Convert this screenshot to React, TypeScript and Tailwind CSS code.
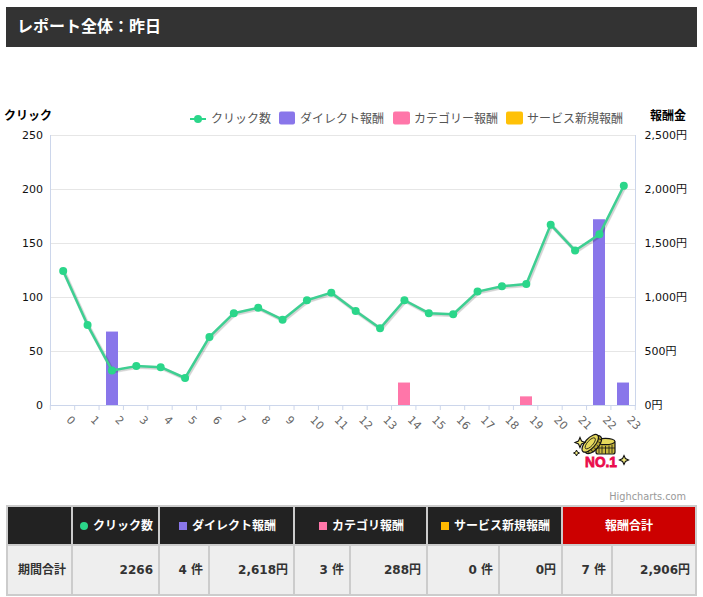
import React from "react";

const font = '"DejaVu Sans", "Noto Sans CJK JP", sans-serif';

const clicks = [124, 74, 32, 36, 35, 25, 63, 85, 90, 79, 97, 104, 87, 71, 97, 85, 84, 105, 110, 112, 167, 143, 158, 203];
const bars = [
  { x: 106, v: 680, color: "#8976ea" },
  { x: 593, v: 1720, color: "#8976ea" },
  { x: 617, v: 208, color: "#8976ea" },
  { x: 398, v: 208, color: "#ff76a9" },
  { x: 520, v: 80, color: "#ff76a9" },
];
const step = 585 / 24;
const cx = (i: number) => 51 + step * (i + 0.5);
const cy = (v: number) => 405 - v * 1.08;
const points = clicks.map((v, i) => `${cx(i)},${cy(v)}`).join(" ");
const shadowPoints = clicks.map((v, i) => `${cx(i) + 1},${cy(v) + 1}`).join(" ");

const Coins = () => (
  <g>
    {/* stack */}
    <rect x="596" y="441" width="19" height="13" rx="2" fill="#c9b83e" stroke="#141414" strokeWidth="1.2" />
    <ellipse cx="605.500" cy="441.500" rx="9.500" ry="3.200" fill="#e6d95c" stroke="#141414" strokeWidth="1.2" />
    <path d="M596 448h19M599 445v8M602 445.500v8M605.500 446v8M609 445.500v8M612 445v8" stroke="#141414" strokeWidth="0.8" fill="none" />
    {/* leaning coin */}
    <g transform="rotate(-48 591 444)">
      <ellipse cx="592" cy="446" rx="11" ry="5.500" fill="#b9a835" stroke="#141414" strokeWidth="1.2" />
      <path d="M583 449l1-3M586 451l1-3M590 452l.5-3M594 452l0-3M598 451l-.5-3M601 449l-1-3" stroke="#141414" strokeWidth="0.8" />
      <ellipse cx="591" cy="443" rx="11" ry="5" fill="#e6d95c" stroke="#141414" strokeWidth="1.2" />
      <ellipse cx="591" cy="443" rx="7" ry="2.800" fill="none" stroke="#141414" strokeWidth="0.8" />
    </g>
    {/* sparkles */}
    <path d="M580 437.500l1.500 3.500 3.500 1.500-3.500 1.500-1.500 3.500-1.500-3.500-3.500-1.500 3.500-1.500z" fill="#f3ec80" stroke="#111" strokeWidth="1.1" />
    <path d="M576.500 450l.9 2.100 2.100.9-2.100.9-.9 2.100-.9-2.100-2.100-.9 2.100-.9z" fill="#f3ec80" stroke="#111" strokeWidth="1" />
    <path d="M624 455.500l1.400 3.100 3.100 1.400-3.100 1.400-1.400 3.100-1.400-3.100-3.100-1.400 3.100-1.400z" fill="#f3ec80" stroke="#111" strokeWidth="1.1" />
    <text x="585" y="467" fontSize="15" fontWeight="700" fill="#ea0b4c" stroke="#ea0b4c" strokeWidth="0.8" textLength="32" lengthAdjust="spacingAndGlyphs" style={{ fontFamily: '"Liberation Sans", sans-serif' }}>
      NO.1
    </text>
  </g>
);

const Chart = () => (
  <svg viewBox="0 47 703 458" width="703" height="458" className="block" style={{ fontFamily: font }}>
    {[135, 189, 243, 297, 351].map((y) => (
      <line key={y} x1="51" x2="635" y1={y + 0.5} y2={y + 0.5} stroke="#e6e6e6" />
    ))}
    <line x1="50.500" x2="50.500" y1="135" y2="405" stroke="#ccd6eb" />
    <line x1="635.500" x2="635.500" y1="135" y2="405" stroke="#ccd6eb" />
    {bars.map((b) => (
      <rect key={b.x} x={b.x} y={405 - b.v * 0.108} width="12" height={b.v * 0.108} fill={b.color} />
    ))}
    <line x1="50" x2="636" y1="405.500" y2="405.500" stroke="#ccd6eb" />
    {Array.from({ length: 25 }, (_, i) => (
      <line key={i} x1={50.3 + step * i} x2={50.3 + step * i} y1="405" y2="410" stroke="#ccd6eb" />
    ))}

    <polyline points={shadowPoints} fill="none" stroke="#000" strokeOpacity="0.1" strokeWidth="4" />
    <polyline points={shadowPoints} fill="none" stroke="#000" strokeOpacity="0.08" strokeWidth="3" />
    <polyline points={points} fill="none" stroke="#3ecf92" strokeWidth="2.500" strokeLinejoin="round" />
    {clicks.map((v, i) => (
      <circle key={i} cx={cx(i)} cy={cy(v)} r="4" fill="#2bd68a" />
    ))}

    {/* left axis */}
    <text x="4" y="120" fontSize="12" fontWeight="700" fill="#000">クリック</text>
    {[250, 200, 150, 100, 50, 0].map((v, i) => (
      <text key={v} x="43" y={139 + i * 54} fontSize="11" fill="#111" textAnchor="end">{v}</text>
    ))}

    {/* right axis */}
    <text x="686" y="120" fontSize="12" fontWeight="700" fill="#000" textAnchor="end">報酬金</text>
    {["2,500円", "2,000円", "1,500円", "1,000円", "500円", "0円"].map((v, i) => (
      <text key={v} x="644.500" y={139 + i * 54} fontSize="11" fill="#111">{v}</text>
    ))}

    {/* x axis */}
    {clicks.map((_, i) => (
      <text key={i} x={cx(i) + 2.5} y="420.500" fontSize="11" fill="#666" transform={`rotate(45 ${cx(i) + 2.5} 420.500)`}>{i}</text>
    ))}

    {/* legend */}
    <line x1="190" x2="206" y1="119" y2="119" stroke="#2bd68a" strokeWidth="2" />
    <circle cx="198" cy="119" r="4" fill="#2bd68a" />
    <text x="211" y="123" fontSize="12" fill="#555">クリック数</text>
    <rect x="279" y="111.500" width="16" height="13" rx="2" fill="#8976ea" />
    <text x="300" y="123" fontSize="12" fill="#555">ダイレクト報酬</text>
    <rect x="393" y="111.500" width="17" height="13" rx="2" fill="#ff76a9" />
    <text x="414" y="123" fontSize="12" fill="#555">カテゴリー報酬</text>
    <rect x="506" y="111.500" width="17" height="13" rx="2" fill="#ffc107" />
    <text x="527" y="123" fontSize="12" fill="#555">サービス新規報酬</text>

    <Coins />
    <text x="686" y="500" fontSize="9.750" fill="#999" textAnchor="end">Highcharts.com</text>
  </svg>
);

const Head = ({ dot, label, span = 1, red = false }: { dot?: string; label: string; span?: number; red?: boolean }) => (
  <th colSpan={span} className={`border-2 border-[#ccc] text-center text-xs font-bold text-white ${dot ? "pl-[2px]" : ""} ${red ? "bg-[#cc0000]" : "bg-[#222]"}`}>
    {dot && (
      <span
        className={`mr-[5px] inline-block size-2 ${dot === "#2bd68a" ? "rounded-full bg-[#2bd68a]" : dot === "#8976ea" ? "bg-[#8976ea]" : dot === "#ff76a9" ? "bg-[#ff76a9]" : "bg-[#ffb900]"}`}
      />
    )}
    {label}
  </th>
);

const Cell = ({ children }: { children?: React.ReactNode }) => (
  <td className="border-2 border-[#ccc] bg-[#eee] pr-[5px] text-right text-xs font-bold text-[#333]">{children}</td>
);

export default function App() {
  return (
    <div className="h-[597px] w-[703px] overflow-hidden bg-white" style={{ fontFamily: font }}>
      <h2 className="mx-[6px] mt-[7px] flex h-10 items-center bg-[#333] pl-[11px] text-base font-bold text-white">
        レポート全体：昨日
      </h2>
      <Chart />
      <table className="ml-[6px] w-[689px] table-fixed border-collapse">
        <colgroup>
          <col className="w-[65px]" />
          <col className="w-[87px]" />
          <col className="w-[50px]" />
          <col className="w-[85px]" />
          <col className="w-[56px]" />
          <col className="w-[77px]" />
          <col className="w-[72px]" />
          <col className="w-[63px]" />
          <col className="w-[50px]" />
          <col className="w-[84px]" />
        </colgroup>
        <thead>
          <tr className="h-[39px]">
            <Head label="" />
            <Head dot="#2bd68a" label="クリック数" />
            <Head dot="#8976ea" label="ダイレクト報酬" span={2} />
            <Head dot="#ff76a9" label="カテゴリ報酬" span={2} />
            <Head dot="#ffb900" label="サービス新規報酬" span={2} />
            <Head label="報酬合計" span={2} red />
          </tr>
        </thead>
        <tbody>
          <tr className="h-[50px]">
            <Cell>期間合計</Cell>
            <Cell>2266</Cell>
            <Cell>4 件</Cell>
            <Cell>2,618円</Cell>
            <Cell>3 件</Cell>
            <Cell>288円</Cell>
            <Cell>0 件</Cell>
            <Cell>0円</Cell>
            <Cell>7 件</Cell>
            <Cell>2,906円</Cell>
          </tr>
        </tbody>
      </table>
    </div>
  );
}
